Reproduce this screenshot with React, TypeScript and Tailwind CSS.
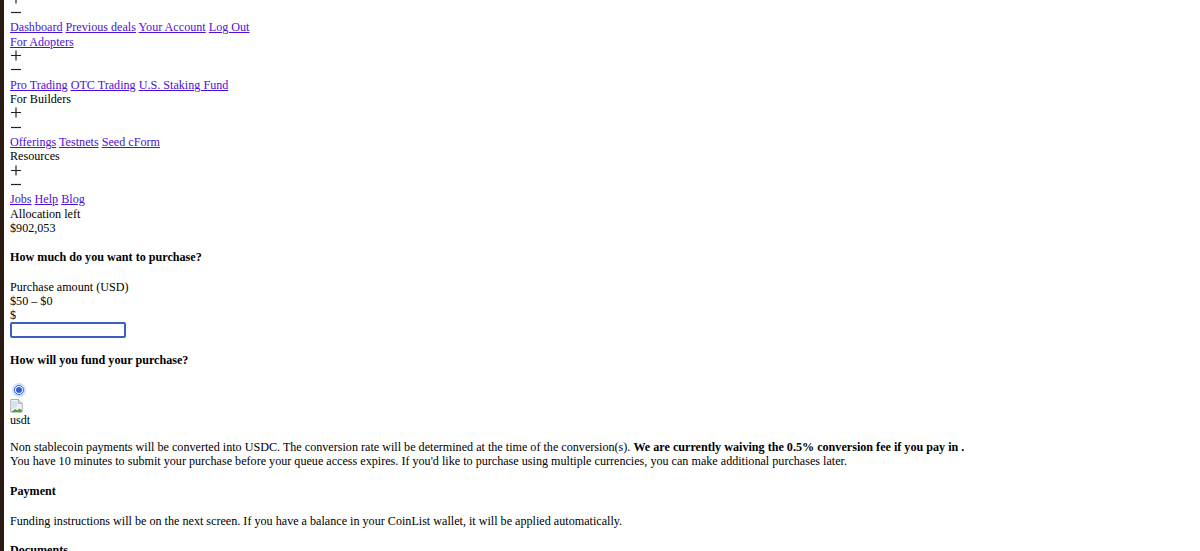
import React from 'react';

const linkClass = 'text-[#4a10d8] underline';

const Plus = () => (
  <svg viewBox="0 0 12 14.33" className="block w-[12px] h-[14.33px]" fill="none" stroke="#222" strokeWidth="1.2">
    <path d="M1 6.500h10M6 1.500v10" />
  </svg>
);

const Minus = () => (
  <svg viewBox="0 0 12 14.33" className="block w-[12px] h-[14.33px]" fill="none" stroke="#222" strokeWidth="1.2">
    <path d="M1 6.500h10" />
  </svg>
);

const Toggle = () => (
  <>
    <Plus />
    <Minus />
  </>
);

const Links = ({ items }: { items: string[] }) => (
  <div>
    {items.map((item, i) => (
      <React.Fragment key={item}>
        {i > 0 && ' '}
        <a href="#" className={linkClass}>{item}</a>
      </React.Fragment>
    ))}
  </div>
);

// broken image placeholder
const BrokenImage = () => (
  <svg width="13" height="14.33" viewBox="0 0 13 15" className="block">
    <path d="M.5.5h8l4 4v9H.5z" fill="#f4f4f4" stroke="#a8a8a8" />
    <path d="M8.500.5v4h4" fill="#e4e4e4" stroke="#a8a8a8" />
    <path d="M1 14l4-3.500 3 1.500 1-2 3 1.500V14z" fill="#4f9d45" />
    <path d="M1.500 2h6v6l-6 3z" fill="#d5e2f6" />
  </svg>
);

const App: React.FC = () => {
  return (
    <div className="h-[551px] overflow-hidden bg-white border-l-4 border-[#2a1a12] pl-1.5 text-[12.13px] leading-[14.33px] text-black font-['Liberation_Serif',serif]">
      <div className="-mt-[8.300px]">
        <Toggle />
      </div>
      <Links items={['Dashboard', 'Previous deals', 'Your Account', 'Log Out']} />
      <Links items={['For Adopters']} />
      <Toggle />
      <Links items={['Pro Trading', 'OTC Trading', 'U.S. Staking Fund']} />
      <div>For Builders</div>
      <Toggle />
      <Links items={['Offerings', 'Testnets', 'Seed cForm']} />
      <div>Resources</div>
      <Toggle />
      <Links items={['Jobs', 'Help', 'Blog']} />
      <div>Allocation left</div>
      <div>$902,053</div>
      <h3 className="mt-[15px] font-bold">How much do you want to purchase?</h3>
      <div className="mt-[15px]">Purchase amount (USD)</div>
      <div>$50 – $0</div>
      <div>$</div>
      <input className="block -mt-[1px] w-[116px] h-[16px] border-2 border-[#3a5fc0] rounded-[2px] outline-none" />
      <h3 className="mt-[15px] font-bold">How will you fund your purchase?</h3>
      <div className="mt-[16px] h-[16px] flex items-center pl-[2px]">
        <span className="flex items-center justify-center w-[14px] h-[14px] mb-[2px] rounded-full bg-[#d3dff9]">
          <input type="radio" defaultChecked className="w-[10px] h-[10px] m-0 accent-[#2f5fd8]" />
        </span>
      </div>
      <BrokenImage />
      <div>usdt</div>
      <p className="mt-[12px]">
        Non stablecoin payments will be converted into USDC. The conversion rate will be determined at the time of the conversion(s). <b>We are currently waiving the 0.5% conversion fee if you pay in .</b>
      </p>
      <p>You have 10 minutes to submit your purchase before your queue access expires. If you'd like to purchase using multiple currencies, you can make additional purchases later.</p>
      <h3 className="mt-[16px] font-bold">Payment</h3>
      <p className="mt-[15px]">Funding instructions will be on the next screen. If you have a balance in your CoinList wallet, it will be applied automatically.</p>
      <h3 className="mt-[15px] font-bold">Documents</h3>
    </div>
  );
};

export default App;
